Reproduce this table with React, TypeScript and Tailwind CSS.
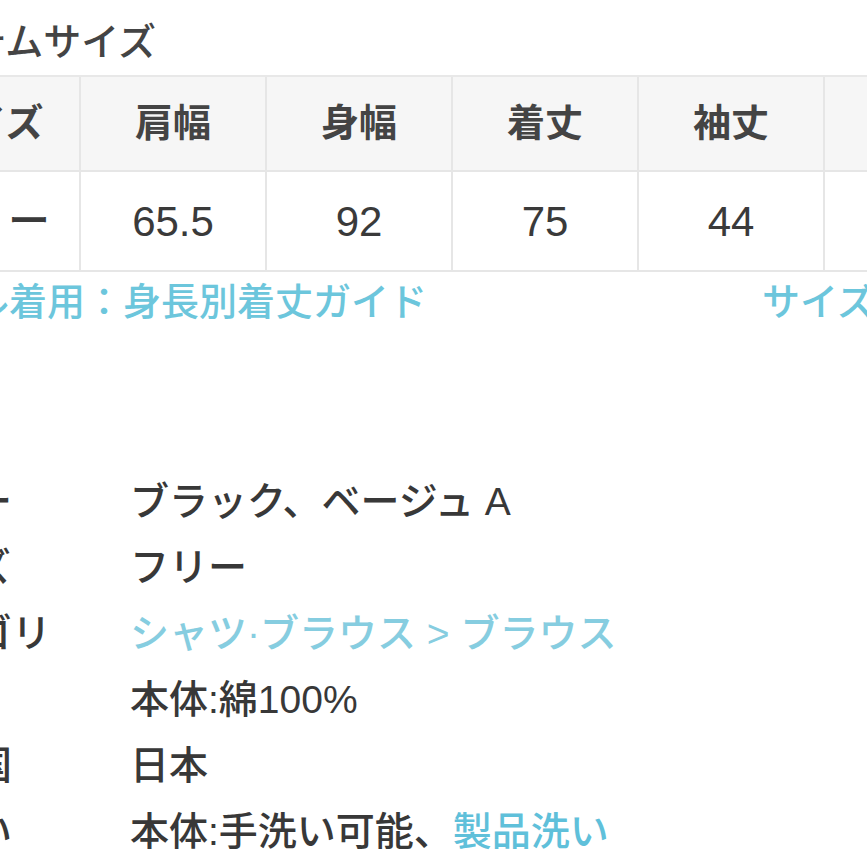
import React from 'react';

const sizeHead = ['サイズ', '肩幅', '身幅', '着丈', '袖丈', '総丈'];
const sizeBody = ['フリー', '65.5', '92', '75', '44', '80'];

type Spec = { label: string; value: React.ReactNode };

const specs: Spec[] = [
  { label: 'カラー', value: 'ブラック、ベージュ A' },
  { label: 'サイズ', value: 'フリー' },
  {
    label: 'カテゴリ',
    value: <span className="text-[#86cde0]">シャツ·ブラウス &gt; ブラウス</span>,
  },
  { label: '素材', value: '本体:綿100%' },
  { label: '原産国', value: '日本' },
  {
    label: '取扱い',
    value: (
      <>
        本体:手洗い可能、<span className="text-[#5fc0da]">製品洗い</span>
      </>
    ),
  },
];

function App() {
  return (
    <div className="w-[867px] h-[867px] overflow-hidden bg-white text-[#383838] font-medium font-['Liberation_Sans','Noto_Sans_CJK_JP',sans-serif]">
      <div className="ml-[-105px] w-[1200px]">
        {/* Section title */}
        <h2 className="pt-[22px] text-[38px] leading-[40px] text-[#444]">アイテムサイズ</h2>

        {/* Size table */}
        <div className="mt-[13px] grid grid-cols-[repeat(6,186px)] border-t-2 border-[#e8e8e8]">
          {sizeHead.map(h => (
            <div
              key={h}
              className="h-[95px] flex items-center justify-center bg-[#f6f6f6] border-r-2 border-b-2 border-[#e6e6e6] text-[38px] font-bold text-[#444]"
            >
              {h}
            </div>
          ))}
          {sizeBody.map(v => (
            <div
              key={v}
              className="h-[100px] flex items-center justify-center bg-white border-r-2 border-b-2 border-[#e6e6e6] text-[42px] text-[#3a3a3a]"
            >
              {v}
            </div>
          ))}
        </div>

        {/* Guide links */}
        <div className="mt-[10px] flex text-[38px] leading-[40px] text-[#6cc6dc]">
          <span>モデル着用：身長別着丈ガイド</span>
          <span className="ml-[335px]">サイズの測り方</span>
        </div>

        {/* Item details */}
        <dl className="mt-[147px] text-[39px] leading-[66px]">
          {specs.map(s => (
            <div key={s.label} className="flex">
              <dt className="w-[235px] shrink-0">{s.label}</dt>
              <dd>{s.value}</dd>
            </div>
          ))}
        </dl>
      </div>
    </div>
  );
}

export default App;
